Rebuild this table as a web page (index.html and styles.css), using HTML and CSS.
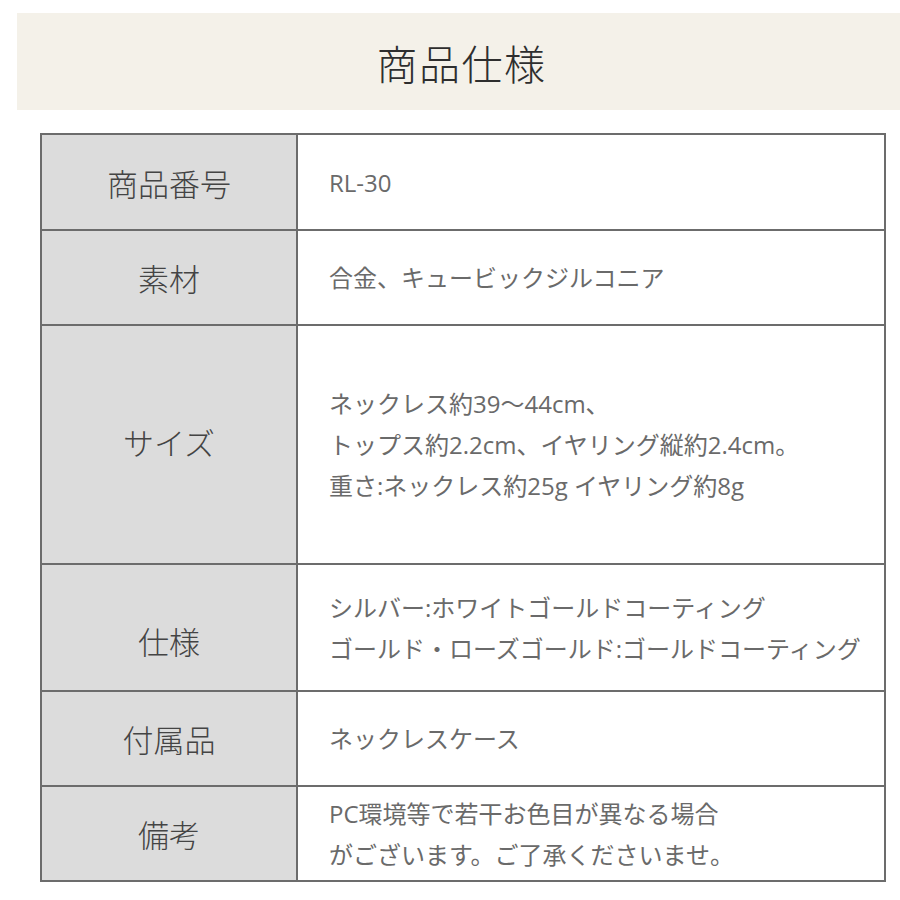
FILE: index.html
```html
<!DOCTYPE html>
<html lang="ja">
<head>
<meta charset="utf-8">
<title>商品仕様</title>
<link rel="stylesheet" href="styles.css">
</head>
<body>
<header class="band">
  <h1 class="title">商品仕様</h1>
</header>
<div class="spec">
  <div class="label">商品番号</div>
  <div class="value">RL-30</div>
  <div class="label">素材</div>
  <div class="value">合金、キュービックジルコニア</div>
  <div class="label label-up">サイズ</div>
  <div class="value">ネックレス約39〜44cm、<br>トップス約2.2cm、イヤリング縦約2.4cm。<br>重さ:ネックレス約25g イヤリング約8g</div>
  <div class="label label-low">仕様</div>
  <div class="value">シルバー:ホワイトゴールドコーティング<br>ゴールド・ローズゴールド:ゴールドコーティング</div>
  <div class="label">付属品</div>
  <div class="value">ネックレスケース</div>
  <div class="label">備考</div>
  <div class="value">PC環境等で若干お色目が異なる場合<br>がございます。ご了承くださいませ。</div>
</div>
</body>
</html>
```

FILE: styles.css
```css
html, body {
  margin: 0;
  padding: 0;
  background: #ffffff;
}

body {
  font-family: "Open Sans", "Noto Sans CJK JP", sans-serif;
}

.band {
  margin: 13px 0 0 17px;
  height: 97px;
  background: #f4f1e9;
  display: flex;
  align-items: center;
  justify-content: center;
}

.title {
  margin: 0 0 0 6px;
  font-family: "Noto Sans CJK JP", serif;
  font-weight: 300;
  font-size: 41px;
  color: #2e2e2e;
  letter-spacing: 1.5px;
}

.spec {
  margin: 23px 0 0 40px;
  width: 846px;
  box-sizing: border-box;
  display: grid;
  grid-template-columns: 254px 586px;
  grid-template-rows: 94px 93px 237px 125px 93px 93px;
  gap: 2px;
  padding: 2px;
  background: #6c6c6c;
}

.label {
  background: #dcdcdc;
  display: flex;
  align-items: center;
  justify-content: center;
  font-family: "Noto Sans CJK JP", sans-serif;
  font-weight: 300;
  font-size: 31px;
  color: #444444;
}

.label-up {
  padding-bottom: 6px;
}

.label-low {
  padding-top: 26px;
}

.value {
  background: #ffffff;
  display: flex;
  align-items: center;
  padding-left: 31px;
  font-size: 24px;
  font-weight: 400;
  line-height: 41px;
  color: #6a6a6a;
}
```
